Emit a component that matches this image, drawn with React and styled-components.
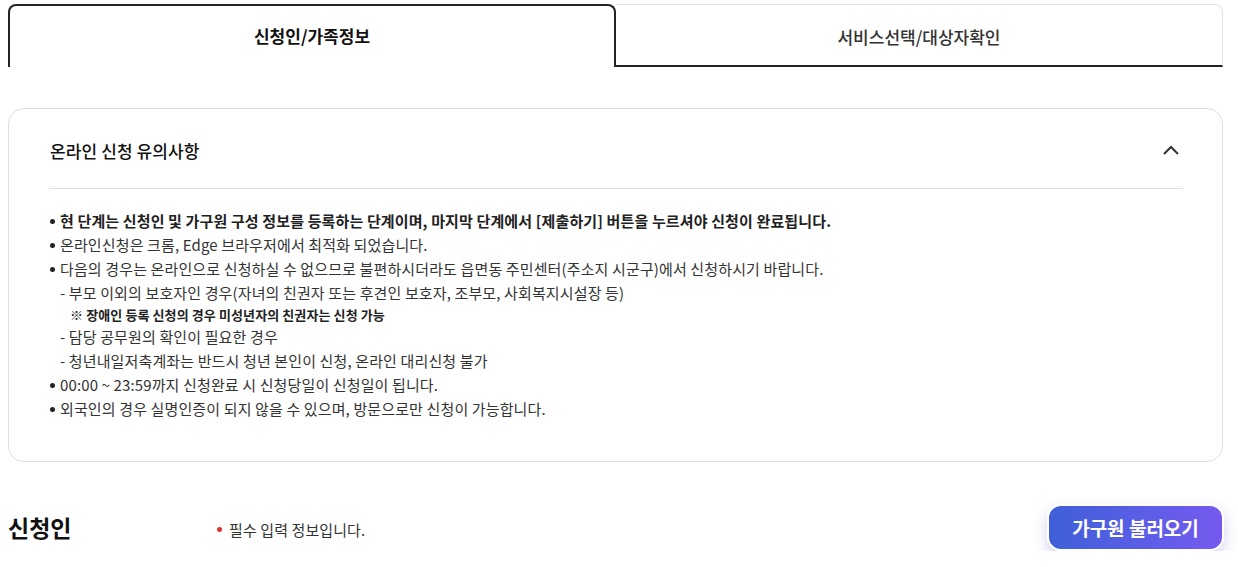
import React from "react";
import styled, { createGlobalStyle } from "styled-components";

const Global = createGlobalStyle`
  html, body { margin: 0; padding: 0; background: #fff; }
  body { font-family: "Noto Sans CJK KR", "Noto Sans", sans-serif; color: #222; }
  * { box-sizing: border-box; }
`;

const Page = styled.div`
  width: 1223px;
  padding: 4px 0 0 8px;
`;

const Tabs = styled.div`
  display: flex;
  height: 63px;
`;

const Tab = styled.div`
  display: flex;
  align-items: center;
  justify-content: center;
  height: 63px;
  font-size: 17px;
  letter-spacing: 0;
  ${(p) =>
    p.$active
      ? `
    width: 608px;
    border: 2px solid #222;
    border-bottom: none;
    border-radius: 8px 8px 0 0;
    font-weight: 700;
    color: #111;
    padding-bottom: 2px;
  `
      : `
    flex: 1;
    border: 1px solid #e2e2e2;
    border-left: none;
    border-bottom: 2px solid #222;
    border-radius: 0 8px 0 0;
    font-weight: 500;
    color: #333;
    padding-top: 2px;
  `}
`;

const Card = styled.section`
  margin-top: 41px;
  border: 1px solid #dedede;
  border-radius: 16px;
  padding: 0 39px 40px 40px;
`;

const CardHead = styled.div`
  display: flex;
  align-items: center;
  justify-content: space-between;
  height: 80px;
  border-bottom: 1px solid #e0e0e0;
  padding: 3px 0 0 1px;
`;

const CardTitle = styled.h2`
  margin: 0;
  font-size: 17px;
  font-weight: 500;
  letter-spacing: 0.1px;
  color: #111;
`;

const Chevron = styled.svg`
  width: 20px;
  height: 20px;
  margin-right: 2px;
`;

const List = styled.ul`
  list-style: none;
  margin: 20px 0 0;
  padding: 0 0 0 1px;
`;

const Item = styled.li`
  position: relative;
  font-size: 15px;
  line-height: 24px;
  letter-spacing: 0.13px;
  color: #333;
  padding-left: 10px;
  font-weight: ${(p) => (p.$strong ? 700 : 400)};
  ${(p) => p.$strong && "color: #222;"}
  ${(p) =>
    !p.$sub &&
    `
    &::before {
      content: "";
      position: absolute;
      left: 0;
      top: 10px;
      width: 5px;
      height: 5px;
      border-radius: 50%;
      background: #222;
    }
  `}
`;

const Note = styled.li`
  font-size: 13px;
  line-height: 20px;
  font-weight: 700;
  letter-spacing: 0.1px;
  color: #222;
  padding-left: 20px;
`;

const Section = styled.div`
  display: flex;
  align-items: center;
  margin-top: 41px;
  height: 48px;
`;

const SectionTitle = styled.h3`
  margin: 0;
  width: 209px;
  font-size: 23px;
  font-weight: 700;
  letter-spacing: 0;
  color: #111;
`;

const Required = styled.p`
  margin: 0;
  flex: 1;
  font-size: 15px;
  letter-spacing: 0.1px;
  color: #333;
  display: flex;
  align-items: center;
  gap: 7px;
  padding-top: 4px;
`;

const Dot = styled.span`
  width: 5px;
  height: 5px;
  border-radius: 50%;
  background: #e0312f;
`;

const LoadButton = styled.button`
  height: 47px;
  width: 177px;
  border: 2px solid #fff;
  border-radius: 14px;
  background: linear-gradient(90deg, #3e5fd8 0%, #5b5ee6 55%, #7659ee 100%);
  box-shadow: 0 6px 14px rgba(90, 90, 200, 0.28);
  color: #fff;
  font-family: inherit;
  font-size: 19px;
  font-weight: 700;
  letter-spacing: 0;
  cursor: pointer;
  margin-right: -1px;
`;

export default function App() {
  return (
    <>
      <Global />
      <Page>
        <Tabs>
          <Tab $active>신청인/가족정보</Tab>
          <Tab>서비스선택/대상자확인</Tab>
        </Tabs>

        <Card>
          <CardHead>
            <CardTitle>온라인 신청 유의사항</CardTitle>
            <Chevron viewBox="0 0 20 20" fill="none">
              <polyline points="3,14 10,7 17,14" stroke="#333" strokeWidth="2" />
            </Chevron>
          </CardHead>
          <List>
            <Item $strong>
              현 단계는 신청인 및 가구원 구성 정보를 등록하는 단계이며, 마지막 단계에서 [제출하기] 버튼을 누르셔야 신청이 완료됩니다.
            </Item>
            <Item>온라인신청은 크롬, Edge 브라우저에서 최적화 되었습니다.</Item>
            <Item>
              다음의 경우는 온라인으로 신청하실 수 없으므로 불편하시더라도 읍면동 주민센터(주소지 시군구)에서 신청하시기 바랍니다.
            </Item>
            <Item $sub>- 부모 이외의 보호자인 경우(자녀의 친권자 또는 후견인 보호자, 조부모, 사회복지시설장 등)</Item>
            <Note>※ 장애인 등록 신청의 경우 미성년자의 친권자는 신청 가능</Note>
            <Item $sub>- 담당 공무원의 확인이 필요한 경우</Item>
            <Item $sub>- 청년내일저축계좌는 반드시 청년 본인이 신청, 온라인 대리신청 불가</Item>
            <Item>00:00 ~ 23:59까지 신청완료 시 신청당일이 신청일이 됩니다.</Item>
            <Item>외국인의 경우 실명인증이 되지 않을 수 있으며, 방문으로만 신청이 가능합니다.</Item>
          </List>
        </Card>

        <Section>
          <SectionTitle>신청인</SectionTitle>
          <Required>
            <Dot />
            필수 입력 정보입니다.
          </Required>
          <LoadButton>가구원 불러오기</LoadButton>
        </Section>
      </Page>
    </>
  );
}
